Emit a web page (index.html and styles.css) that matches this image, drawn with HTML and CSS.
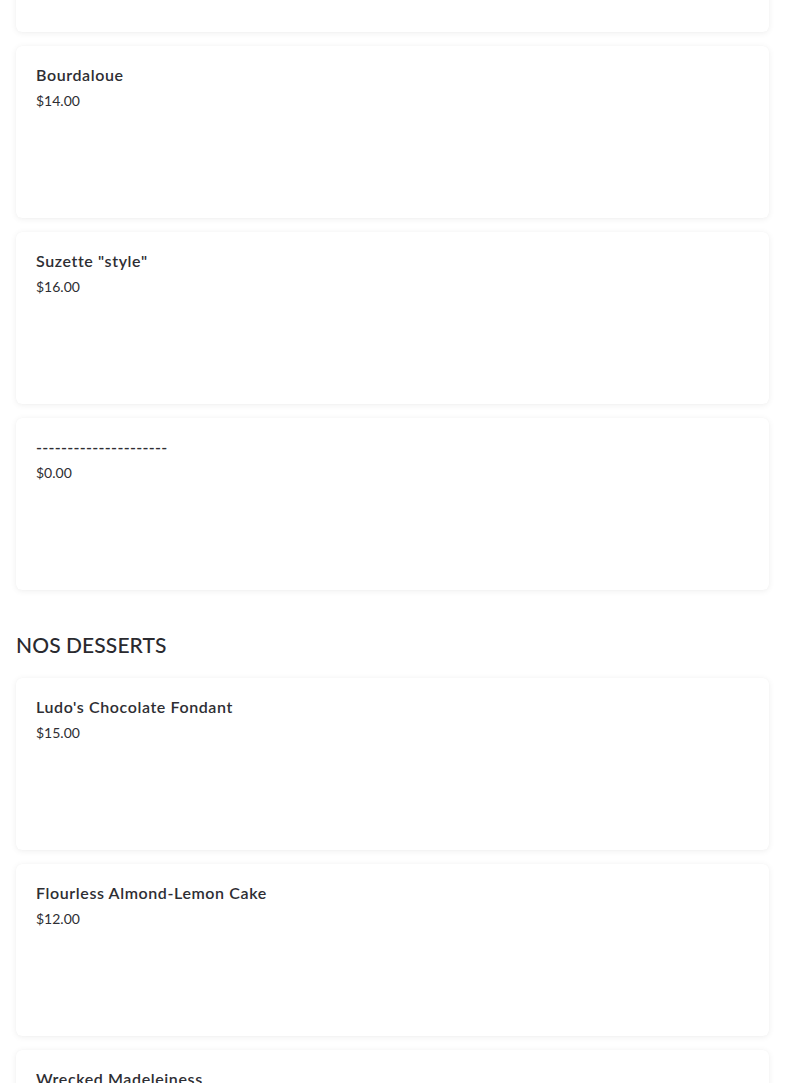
FILE: index.html
```html
<!DOCTYPE html>
<html lang="en">
<head>
<meta charset="utf-8">
<link rel="stylesheet" href="styles.css">
<title>Menu</title>
</head>
<body>
<div class="menu">
  <section class="group">
    <div class="card card-partial"></div>
    <div class="card"><h3 class="name">Bourdaloue</h3><p class="price">$14.00</p></div>
    <div class="card"><h3 class="name">Suzette "style"</h3><p class="price">$16.00</p></div>
    <div class="card"><h3 class="name name-divider">---------------------</h3><p class="price">$0.00</p></div>
  </section>
  <section class="group">
    <h2 class="section-title">NOS DESSERTS</h2>
    <div class="card"><h3 class="name">Ludo's Chocolate Fondant</h3><p class="price">$15.00</p></div>
    <div class="card"><h3 class="name">Flourless Almond-Lemon Cake</h3><p class="price">$12.00</p></div>
    <div class="card"><h3 class="name">Wrecked Madeleiness</h3><p class="price">$10.00</p></div>
  </section>
</div>
</body>
</html>
```
FILE: styles.css
```css
html, body {
  margin: 0;
  padding: 0;
  background: #ffffff;
}
body {
  font-family: Lato, "Noto Sans", sans-serif;
  color: #2e2e33;
  overflow: hidden;
  height: 1083px;
}
.menu {
  margin-top: -140px;
  padding: 0 16px;
}
.group {
  display: flex;
  flex-direction: column;
  gap: 14px;
}
.section-title {
  margin: 43px 0 7px;
  font-size: 21px;
  line-height: 24px;
  font-weight: 500;
  letter-spacing: 0.1px;
  color: #2a2a2f;
}
.card {
  height: 172px;
  box-sizing: border-box;
  padding: 19px 20px;
  background: #fff;
  border-radius: 6px;
  box-shadow: 0 1px 6px rgba(0, 0, 0, 0.07), 0 0 1px rgba(0, 0, 0, 0.04);
}
.name {
  margin: 0;
  font-size: 16px;
  line-height: 20px;
  font-weight: 600;
  letter-spacing: 0.6px;
  color: #2e2e33;
}
.name-divider {
  letter-spacing: 0.3px;
}
.price {
  margin: 7px 0 0;
  font-size: 14px;
  line-height: 18px;
  font-weight: 400;
  color: #2e2e33;
}
```
